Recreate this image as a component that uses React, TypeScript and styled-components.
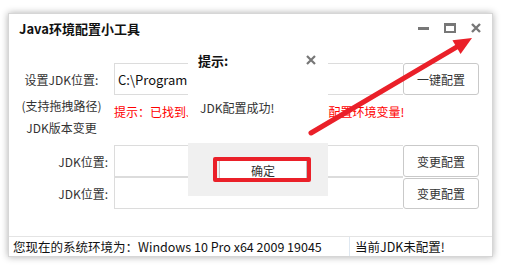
import React from 'react';
import styled, { createGlobalStyle } from 'styled-components';

const GlobalStyle = createGlobalStyle`
  html, body {
    margin: 0;
    padding: 0;
    background: #ffffff;
  }
  body {
    font-family: "Noto Sans CJK SC", "Noto Sans", sans-serif;
    color: #333;
  }
`;

const Page = styled.div`
  position: relative;
  width: 513px;
  height: 272px;
  overflow: hidden;
`;

const Window = styled.div`
  position: relative;
  margin: 13px 0 0 8px;
  width: 485px;
  height: 244px;
  box-sizing: border-box;
  background: #fff;
  border: 1px solid #d6d6d6;
  box-shadow: 0 0 7px rgba(0, 0, 0, 0.32);
  display: flex;
  flex-direction: column;
`;

const TitleBar = styled.div`
  height: 28px;
  display: flex;
  align-items: center;
  padding: 0 11px 0 10px;
`;

const Title = styled.div`
  flex: 1;
  font-size: 13px;
  font-weight: 700;
  color: #111;
`;

const WinControls = styled.div`
  display: flex;
  align-items: center;
  gap: 15px;
  color: #777;
`;

const Body = styled.div`
  padding: 21px 13px 0 0;
  display: flex;
  flex-direction: column;
`;

const Row = styled.div<{ $h: number; $gap?: number }>`
  display: grid;
  grid-template-columns: 105px 289px 76px;
  height: ${({ $h }) => $h}px;
  margin-top: ${({ $gap }) => $gap ?? 0}px;
  align-items: stretch;
`;

const Label = styled.div<{ $align?: 'center' | 'right' }>`
  display: flex;
  align-items: center;
  justify-content: ${({ $align }) => ($align === 'right' ? 'flex-end' : 'center')};
  padding-right: ${({ $align }) => ($align === 'right' ? '6px' : '0')};
  font-size: 12px;
  color: #333;
`;

const Input = styled.div<{ $overlap?: boolean }>`
  box-sizing: border-box;
  height: 32px;
  margin-top: ${({ $overlap }) => ($overlap ? '-1px' : '0')};
  border: 1px solid #dcdcdc;
  border-right: none;
  display: flex;
  align-items: center;
  padding-left: 3px;
  font-size: 13px;
  color: #111;
  white-space: nowrap;
  overflow: hidden;
`;

const Button = styled.div`
  box-sizing: border-box;
  border: 1px solid #c9c9c9;
  border-radius: 3px;
  background: #fff;
  display: flex;
  align-items: center;
  justify-content: center;
  font-size: 12px;
  color: #333;
`;

const HintRow = styled.div`
  display: grid;
  grid-template-columns: 105px 365px;
  height: 50px;
`;

const SideNotes = styled.div`
  display: flex;
  flex-direction: column;
  align-items: center;
  font-size: 12px;
  line-height: 22px;
  color: #333;
`;

const RedHint = styled.div`
  padding-top: 6px;
  line-height: 22px;
  font-size: 12px;
  color: #f00;
  white-space: nowrap;
`;

const Spacer = styled.div`
  flex: 1;
`;

const StatusBar = styled.div`
  margin-top: 22px;
  border-top: 1px solid #e4e4e4;
  flex: 1;
  display: grid;
  grid-template-columns: 340px 1fr;
  font-size: 12.5px;
  color: #111;
`;

const StatusCell = styled.div<{ $divider?: boolean }>`
  display: flex;
  align-items: center;
  padding-left: ${({ $divider }) => ($divider ? '5px' : '4px')};
  border-left: ${({ $divider }) => ($divider ? '1px solid #dfe8f1' : 'none')};
  white-space: nowrap;
`;

const Dialog = styled.div`
  position: absolute;
  left: 179px;
  top: 30px;
  width: 140px;
  height: 152px;
  background: #fff;
  display: flex;
  flex-direction: column;
`;

const DialogHeader = styled.div`
  height: 32px;
  display: flex;
  align-items: center;
  justify-content: space-between;
  padding: 0 12px 0 10px;
`;

const DialogTitle = styled.div`
  font-size: 13px;
  font-weight: 700;
  color: #111;
`;

const DialogBody = styled.div`
  flex: 1;
  padding: 22px 0 0 12px;
  font-size: 12px;
  line-height: 20px;
  color: #333;
`;

const DialogFooter = styled.div`
  height: 53px;
  background: #f0f0f0;
  padding: 15px 0 0 31px;
  box-sizing: border-box;
  position: relative;
`;

const OkButton = styled.div`
  width: 88px;
  height: 24px;
  box-sizing: border-box;
  border: 1px solid #c4c4c4;
  border-radius: 3px;
  background: #fff;
  display: flex;
  align-items: center;
  justify-content: center;
  font-size: 12px;
  color: #333;
`;

const Highlight = styled.div`
  position: absolute;
  left: 25px;
  top: 14px;
  width: 98px;
  height: 25px;
  box-sizing: border-box;
  border: 4px solid #ea2029;
  border-radius: 2px;
`;

const ArrowLayer = styled.svg`
  position: absolute;
  left: 0;
  top: 0;
  pointer-events: none;
`;

const CloseIcon: React.FC<{ size: number; stroke: number }> = ({ size, stroke }) => (
  <svg width={size} height={size} viewBox="0 0 10 10">
    <path d="M1 1 L9 9 M9 1 L1 9" stroke="#777" strokeWidth={stroke} />
  </svg>
);

export default function App() {
  const tail = { x: 311, y: 133 };
  const tip = { x: 472, y: 38 };
  const dx = tip.x - tail.x;
  const dy = tip.y - tail.y;
  const len = Math.hypot(dx, dy);
  const ux = dx / len;
  const uy = dy / len;
  const headLen = 18;
  const half = 8;
  const bx = tip.x - ux * headLen;
  const by = tip.y - uy * headLen;
  const head = `${tip.x},${tip.y} ${bx - uy * half},${by + ux * half} ${bx + uy * half},${by - ux * half}`;

  return (
    <Page>
      <GlobalStyle />
      <Window>
        <TitleBar>
          <Title>Java环境配置小工具</Title>
          <WinControls>
            <svg width="11" height="10" viewBox="0 0 11 10">
              <rect x="0" y="4" width="11" height="3" fill="#777" />
            </svg>
            <svg width="12" height="10" viewBox="0 0 12 10">
              <rect x="1" y="1" width="10" height="8" fill="none" stroke="#777" strokeWidth="2" />
              <rect x="0" y="0" width="12" height="3" fill="#777" />
            </svg>
            <CloseIcon size={10} stroke={2.4} />
          </WinControls>
        </TitleBar>
        <Body>
          <Row $h={32}>
            <Label>设置JDK位置:</Label>
            <Input>C:\Program</Input>
            <Button>一键配置</Button>
          </Row>
          <HintRow>
            <SideNotes>
              <span>(支持拖拽路径)</span>
              <span>JDK版本变更</span>
            </SideNotes>
            <RedHint>提示：已找到JDK安装路径，请点击一键配置环境变量!</RedHint>
          </HintRow>
          <Row $h={32}>
            <Label $align="right">JDK位置:</Label>
            <Input />
            <Button>变更配置</Button>
          </Row>
          <Row $h={31} $gap={1}>
            <Label $align="right">JDK位置:</Label>
            <Input $overlap />
            <Button>变更配置</Button>
          </Row>
        </Body>
        <Spacer />
        <StatusBar>
          <StatusCell>您现在的系统环境为：Windows 10 Pro x64 2009 19045</StatusCell>
          <StatusCell $divider>当前JDK未配置!</StatusCell>
        </StatusBar>
        <Dialog>
          <DialogHeader>
            <DialogTitle>提示:</DialogTitle>
            <CloseIcon size={10} stroke={2.2} />
          </DialogHeader>
          <DialogBody>JDK配置成功!</DialogBody>
          <DialogFooter>
            <OkButton>确定</OkButton>
            <Highlight />
          </DialogFooter>
        </Dialog>
      </Window>
      <ArrowLayer width="513" height="272">
        <line
          x1={tail.x}
          y1={tail.y}
          x2={bx + ux * 2}
          y2={by + uy * 2}
          stroke="#ea2029"
          strokeWidth="5"
          strokeLinecap="round"
        />
        <polygon points={head} fill="#ea2029" />
      </ArrowLayer>
    </Page>
  );
}
